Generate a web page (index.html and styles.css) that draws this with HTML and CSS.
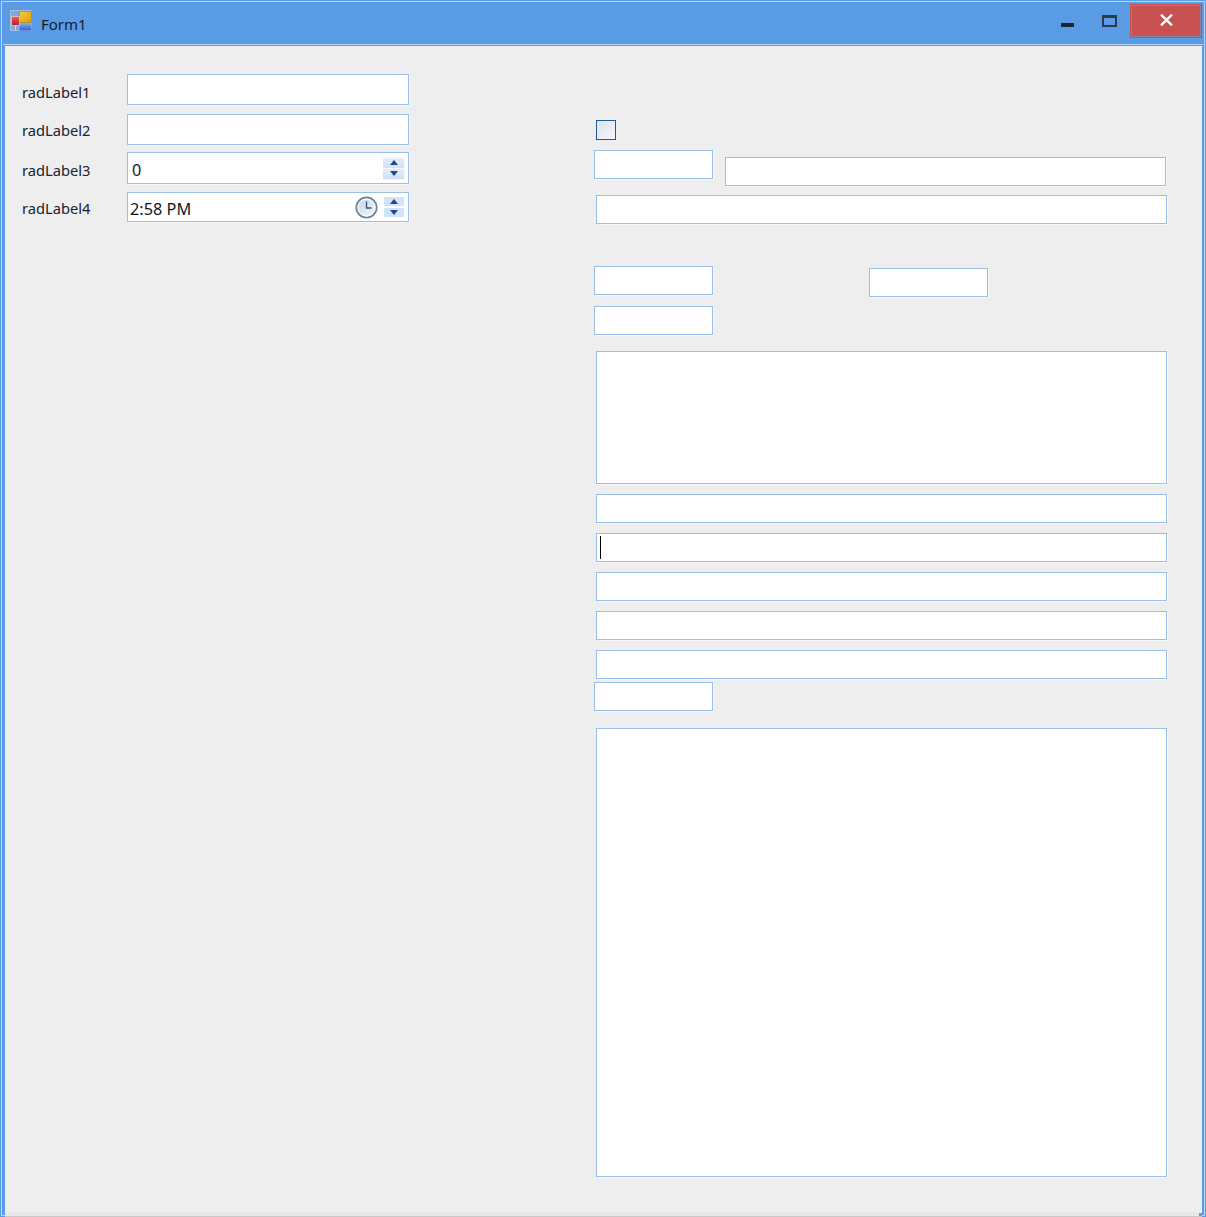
FILE: index.html
```html
<!doctype html>
<html>
	<head>
		<title>Form1</title>
		<meta charset="utf-8"/>
		<link rel="stylesheet" href="styles.css">
	</head>
	<body>
		<div class="window">
			<header class="titlebar">
				<svg class="app-icon" width="23" height="22" viewBox="0 0 23 22">
					<defs>
						<linearGradient id="gold" x1="0" y1="0" x2="1" y2="1"><stop offset="0" stop-color="#f7d040"/><stop offset="1" stop-color="#dc9a08"/></linearGradient>
						<linearGradient id="sky" x1="0" y1="0" x2="0" y2="1"><stop offset="0" stop-color="#86aef0"/><stop offset="1" stop-color="#2f63d0"/></linearGradient>
						<linearGradient id="ruby" x1="0" y1="0" x2="0" y2="1"><stop offset="0" stop-color="#e86060"/><stop offset="1" stop-color="#b81c1c"/></linearGradient>
					</defs>
					<rect x="0.500" y="0.500" width="21" height="20" fill="#7ea9e0" stroke="#a8bdd6"/>
					<path d="M1 15.500h20M5.500 16v4M10.500 16v4" stroke="#c6d4e4" fill="none"/>
					<rect x="9.500" y="1.500" width="12" height="11" fill="url(#gold)" stroke="#b59030"/>
					<rect x="9.500" y="13" width="12" height="7.500" fill="url(#sky)"/>
					<rect x="1.500" y="6.500" width="8" height="9" fill="url(#ruby)" stroke="#e4b4a8"/>
				</svg>
				<span class="title">Form1</span>
				<div class="captions">
					<span class="cap-btn cap-min"><svg width="13" height="4" viewBox="0 0 13 4"><rect width="13" height="4" fill="#1c2530"/></svg></span>
					<span class="cap-btn cap-max"><svg width="15" height="12" viewBox="0 0 15 12"><rect x="1" y="1" width="13" height="10" fill="none" stroke="#2a3a4e" stroke-width="2"/><rect x="1" y="1" width="13" height="2" fill="#2a3a4e"/></svg></span>
					<span class="cap-close"><svg width="13" height="12" viewBox="0 0 13 12"><path d="M1 0.700l11 10.600M12 0.700l-11 10.600" stroke="#fff" stroke-width="2.400" fill="none"/></svg></span>
				</div>
			</header>
			<main class="client">
				<section class="left">
					<div class="row row-1"><label>radLabel1</label><input class="field" type="text"></div>
					<div class="row row-2"><label>radLabel2</label><input class="field" type="text"></div>
					<div class="row row-3"><label>radLabel3</label>
						<div class="field spin">
							<span class="value value-num">0</span>
							<span class="arrows arrows-joined"><i class="up"></i><i class="down"></i></span>
						</div>
					</div>
					<div class="row row-4"><label>radLabel4</label>
						<div class="field spin time">
							<span class="value">2:58 PM</span>
							<svg class="clock" width="23" height="23" viewBox="0 0 23 23">
								<defs><linearGradient id="dial" x1="0" y1="0" x2="1" y2="1"><stop offset="0" stop-color="#c6d3e4"/><stop offset="1" stop-color="#f6f9fd"/></linearGradient></defs>
								<circle cx="11.500" cy="11.500" r="10.200" fill="url(#dial)" stroke="#6c83a0" stroke-width="1.700"/>
								<circle cx="11.500" cy="11.500" r="8.500" fill="none" stroke="#fff" stroke-width="1"/>
								<path d="M11.500 5.500v6.500h5" fill="none" stroke="#3a5576" stroke-width="1.400"/>
							</svg>
							<span class="arrows"><i class="up"></i><i class="down"></i></span>
						</div>
					</div>
				</section>
				<section class="right">
					<div class="check"></div>
					<div class="pair">
						<input class="box small" type="text">
						<input class="box wide" type="text">
					</div>
					<input class="box full gap-9" type="text">
					<div class="pair pair-2">
						<input class="box small" type="text">
						<input class="box small second" type="text">
					</div>
					<input class="box small gap-9" type="text">
					<textarea class="box full area"></textarea>
					<input class="box full gap-10" type="text">
					<div class="box full gap-10 focused"><span class="caret"></span></div>
					<input class="box full gap-10" type="text">
					<input class="box full gap-10" type="text">
					<input class="box full gap-10" type="text">
					<input class="box small gap-3" type="text">
					<textarea class="box full big"></textarea>
				</section>
			</main>
		</div>
	</body>
</html>
```

FILE: styles.css
```css
html, body {
	margin: 0;
	height: 100%;
}

body {
	font-family: "Noto Sans", "Open Sans", sans-serif;
	font-size: 14px;
	color: #1a2230;
	overflow: hidden;
}

.window {
	width: 1206px;
	height: 1217px;
	display: flex;
	flex-direction: column;
	background: #5a9be6;
	box-shadow: inset 0 0 0 1px #5a9be6, inset 0 0 0 2px #b9d6f5;
}

.titlebar {
	box-sizing: border-box;
	height: 45px;
	margin: 0 3px;
	padding-left: 7px;
	border-bottom: 1px solid #b9d6f5;
	display: flex;
	align-items: center;
	flex-shrink: 0;
}

.app-icon { margin-top: -2px; }

.title {
	margin: 4px 0 0 8px;
	font-size: 15px;
	color: #13202f;
}

.captions {
	margin-left: auto;
	margin-top: 4px;
	margin-right: 1px;
	display: flex;
	align-self: flex-start;
}

.cap-btn {
	width: 42px;
	height: 34px;
	display: flex;
	align-items: center;
	justify-content: center;
}

.cap-min svg { margin: 8px 2px 0 0; }
.cap-max svg { margin: 0 2px 0 0; }

.cap-close {
	width: 72px;
	height: 34px;
	margin-left: -1px;
	background: #c75050;
	box-shadow: inset 0 0 0 1px #c75050, inset 0 0 0 2px #8d7fa6;
	display: flex;
	align-items: center;
	justify-content: center;
}

.cap-close svg { margin-top: -2px; }

.client {
	flex: 1;
	position: relative;
	margin: 1px 4px 0 5px;
	background: #eee;
	border-bottom: 1px solid #c9c9c9;
	box-shadow: inset 0 -4px 0 #e8e8e8;
	display: grid;
	grid-template-columns: 589px 1fr;
}

/* small frame notch at the bottom right corner */
.client::after {
	content: "";
	position: absolute;
	right: 0;
	bottom: 0;
	width: 3px;
	height: 3px;
	background: #5a9be6;
}

.left {
	padding: 28px 0 0 17px;
}

.row {
	display: flex;
	align-items: center;
}

.row label {
	width: 105px;
	flex-shrink: 0;
	font-size: 14.700px;
}

.row-1 { height: 31px; }
.row-2 { height: 31px; margin-top: 9px; }
.row-3 { height: 32px; margin-top: 7px; }
.row-4 { height: 30px; margin-top: 8px; }

.row-1 label, .row-3 label { margin-top: 4px; }
.row-4 label { margin-top: 2px; }

.field, .box {
	box-sizing: border-box;
	display: block;
	margin: 0;
	padding: 0;
	background: #fff;
	border: 1px solid #9abeea;
	border-radius: 0;
	outline: none;
	resize: none;
}

.field {
	width: 282px;
	height: 100%;
	box-shadow: 1px 1px 0 #f8f8f8;
}

.spin {
	display: flex;
	align-items: center;
	font-size: 16.300px;
	color: #14181f;
}

.value { padding: 3px 0 0 2px; }
.value-num { padding-left: 4px; }

.clock {
	margin-left: auto;
	flex-shrink: 0;
}

.arrows {
	display: flex;
	flex-direction: column;
	gap: 1px;
	width: 21px;
	margin-left: auto;
	margin-right: 4px;
}

.time .arrows { width: 20px; margin-left: 6px; gap: 2px; }

.arrows i {
	display: flex;
	height: 9px;
	background: #d3e3f9;
	align-items: center;
	justify-content: center;
}

.arrows-joined i {
	height: 10px;
	background: linear-gradient(#e4eefb, #cfe0f8);
	box-shadow: 1px 1px 0 #f4f7fc;
}

.arrows i::before {
	content: "";
	border-left: 4.500px solid transparent;
	border-right: 4.500px solid transparent;
}

.up::before { border-bottom: 5px solid #1c4a8c; }
.down::before { border-top: 5px solid #1c4a8c; }

.right {
	display: flex;
	flex-direction: column;
	align-items: flex-start;
	padding-top: 74px;
}

.check {
	box-sizing: border-box;
	width: 20px;
	height: 20px;
	margin-left: 2px;
	border: 1px solid #1f5a94;
	background: linear-gradient(135deg, #dde2ee, #f5f7fb);
}

.pair {
	display: flex;
	align-items: flex-start;
	margin-top: 10px;
}

.pair-2 { margin-top: 42px; }

.box { height: 29px; box-shadow: 1px 1px 0 #f8f8f8; }

.small { width: 119px; }
.wide { width: 441px; margin: 7px 0 0 12px; }
.second { margin: 2px 0 0 156px; }

.full { width: 571px; margin-left: 2px; }
.gap-3 { margin-top: 3px; }
.gap-9 { margin-top: 9px; }
.gap-10 { margin-top: 10px; }

.area { height: 133px; margin-top: 16px; }
.big { height: 449px; margin-top: 17px; }

.focused {
	display: flex;
	align-items: center;
	padding-left: 3px;
}

.caret {
	display: block;
	width: 1px;
	height: 23px;
	background: #000;
}
```
